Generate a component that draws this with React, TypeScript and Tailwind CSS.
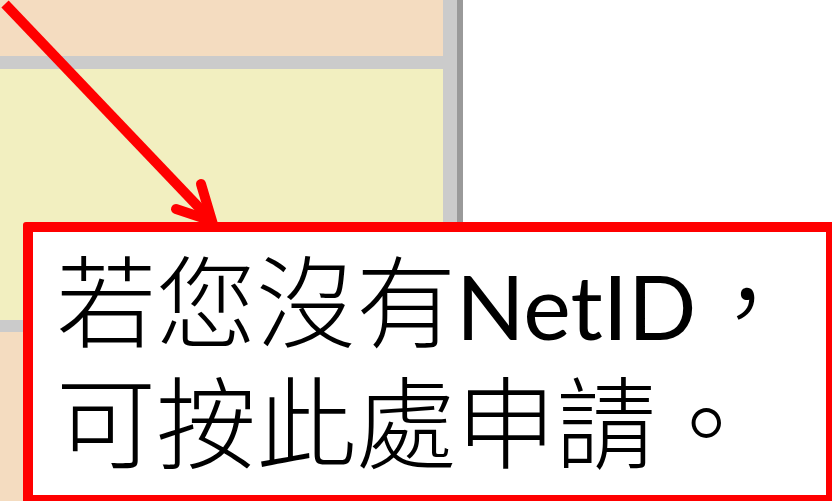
export default function App() {
  return (
    <div className="relative flex h-[501px] w-[832px] overflow-hidden bg-white">
      {/* background slide */}
      <div className="flex w-[443px] flex-col">
        <div className="h-[56px] bg-[#f4dcc0]" />
        <div className="h-[13px] bg-[#cbcbcb]" />
        <div className="h-[251px] bg-[#f2efc0]" />
        <div className="h-[12px] bg-[#cbcbcb]" />
        <div className="flex-1 bg-[#f4dcc0]" />
      </div>
      <div className="w-[14px] bg-[#cbcbcb]" />
      <div className="w-[6px] bg-[#9a9a9a]" />
      <div className="flex-1 bg-white" />

      {/* callout box */}
      <div
        className="absolute left-[23px] top-[222px] h-[283px] w-[813px] rounded-[3px] border-[10px] border-[#ff0000] bg-white pl-[23px] pt-[4px] text-[100px] font-light leading-[121px] text-black"
        style={{ fontFamily: '"Noto Sans CJK TC", "Noto Sans CJK SC", sans-serif' }}
      >
        <div className="h-[121px] whitespace-nowrap">
          若您沒有
          <span className="text-[90px] font-normal leading-[90px]" style={{ fontFamily: 'Lato, "Noto Sans", sans-serif' }}>
            NetID
          </span>
          ，
        </div>
        <div className="h-[121px] whitespace-nowrap">可按此處申請。</div>
      </div>

      {/* arrow */}
      <svg className="absolute left-0 top-0" width="832" height="501" viewBox="0 0 832 501">
        <line x1="5" y1="4" x2="209" y2="218" stroke="#ff0000" strokeWidth="10" />
        <polyline
          points="176,209 212,221 201,184"
          fill="none"
          stroke="#ff0000"
          strokeWidth="10"
          strokeLinecap="round"
          strokeLinejoin="miter"
        />
      </svg>
    </div>
  );
}
